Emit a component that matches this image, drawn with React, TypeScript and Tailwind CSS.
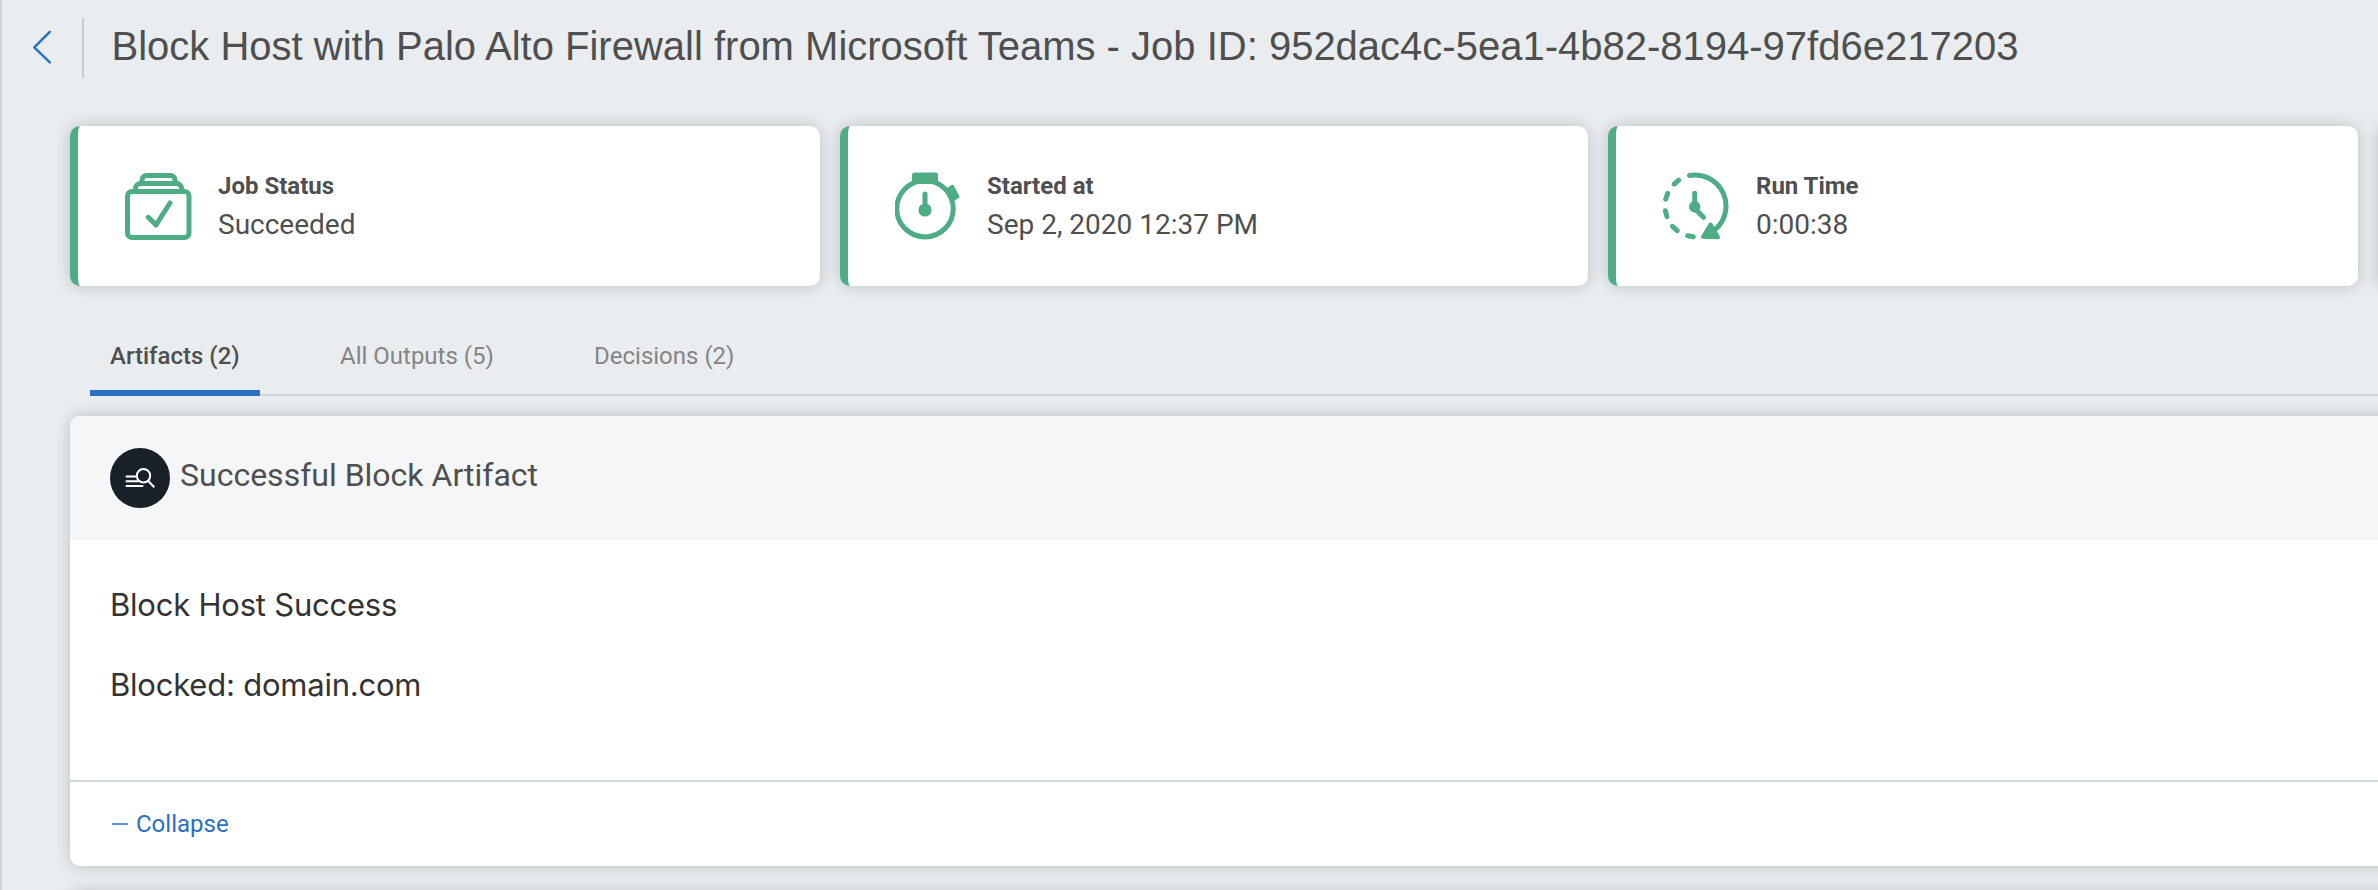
import React from "react";

const shadow = "shadow-[0_0_16px_rgba(0,0,0,0.2)]";

function JobIcon() {
  return (
    <svg viewBox="0 0 68 68" className="size-[68px]" fill="none" stroke="#4ead84" strokeWidth="5" strokeLinecap="round" strokeLinejoin="round">
      <rect x="2.5" y="19.5" width="61.500" height="46" rx="4.5" />
      <path d="M10.5 19V16.5a5 5 0 0 1 5-5h36a5 5 0 0 1 5 5V19M17 11V8a4.500 4.500 0 0 1 4.500-4.500h24a4.500 4.500 0 0 1 4.500 4.500V11" strokeLinecap="butt" />
      <path d="M23.300 45.300L31 53L45 31" />
    </svg>
  );
}

function StopwatchIcon() {
  return (
    <svg viewBox="0 0 68 68" className="size-[68px]" fill="#4ead84">
      <circle cx="30" cy="36.700" r="28.200" fill="none" stroke="#4ead84" strokeWidth="5" />
      <path d="M17 12V3a2.500 2.500 0 0 1 2.500-2.500h21a2.500 2.500 0 0 1 2.500 2.500V12z" />
      <path d="M50.500 17L56 13.200a2.200 2.200 0 0 1 3.200 1L64.300 24a1.800 1.800 0 0 1-.8 2.300L58.500 29z" />
      <circle cx="30" cy="38" r="6.600" />
      <path d="M30 38V22" stroke="#4ead84" strokeWidth="5" strokeLinecap="round" />
    </svg>
  );
}

function RunTimeIcon() {
  return (
    <svg viewBox="0 0 68 68" className="size-[68px]" fill="none" stroke="#4ead84" strokeWidth="5" strokeLinecap="round">
      <path d="M26.500 3.500A31 31 0 0 1 52 57.700" />
      <path d="M15.700 8.200L11.200 12.200M4.700 21.300L2.700 27.200M2.300 38.700L3.900 44.700M9.500 54.300L14.200 58.700M24.700 63.800L30.300 64.800" />
      <circle cx="31.700" cy="34.700" r="5.700" fill="#4ead84" stroke="none" />
      <path d="M31.700 34.700V21.300M31.700 36.500L40.500 45.300" />
      <path d="M47.600 52.500L40 64.700L55 65.200z" fill="#4ead84" strokeWidth="4" strokeLinejoin="round" />
    </svg>
  );
}

const stats = [
  { label: "Job Status", value: "Succeeded", icon: <JobIcon />, width: "w-[750px]", gap: "ml-[25px]" },
  { label: "Started at", value: "Sep 2, 2020 12:37 PM", icon: <StopwatchIcon />, width: "w-[748px]", gap: "ml-6" },
  { label: "Run Time", value: "0:00:38", icon: <RunTimeIcon />, width: "w-[750px]", gap: "ml-[25px]" },
  { label: "", value: "", icon: null, width: "w-[750px]", gap: "ml-[25px]" },
];

export default function App() {
  return (
    <div className="h-[890px] w-full overflow-hidden border-l-2 border-[#cdd2d6] bg-[#e9edf0] font-[Roboto,sans-serif] text-[#4f4f4f]">
      <header className="flex h-[126px] items-start pt-[18px]">
        <button aria-label="Back" className="flex h-[60px] w-20 items-center pl-[29px]">
          <svg viewBox="0 0 22 36" className="h-9 w-[22px]" fill="none" stroke="#2b6fc4" strokeWidth="2.500" strokeLinecap="round" strokeLinejoin="round">
            <path d="M18.800 1.800L3.300 17.300L18.800 32.300" />
          </svg>
        </button>
        <div className="h-[60px] w-0.5 bg-[#c9cdd0]" />
        <h1 className="ml-[27.5px] pt-[5px] font-['Liberation_Sans',sans-serif] text-[40px] leading-[46px] whitespace-nowrap">
          Block Host with Palo Alto Firewall from Microsoft Teams - Job ID: 952dac4c-5ea1-4b82-8194-97fd6e217203
        </h1>
      </header>

      <section className="ml-[68px] flex w-[3060px] gap-5">
        {stats.map((s, i) => (
          <div key={i} className={`flex h-40 shrink-0 items-center rounded-[10px] border-l-8 border-[#4ead84] bg-white pl-[47px] ${s.width} ${shadow}`}>
            {s.icon}
            <div className={s.gap}>
              <div className="text-2xl leading-9 font-bold">{s.label}</div>
              <div className="pt-px text-[28px] leading-[39px]">{s.value}</div>
            </div>
          </div>
        ))}
      </section>

      <nav className="mt-[30px] ml-[88px] flex h-20 items-stretch border-b-2 border-[#d1d5d9] text-2xl leading-7 text-[#858585]">
        <div className="-mb-0.5 w-[170px] border-b-[6px] border-[#2b6fc4] pt-[26px] pl-5 font-medium whitespace-nowrap text-[#4f4f4f]">Artifacts (2)</div>
        <div className="ml-20 w-[254px] pt-[26px] whitespace-nowrap">All Outputs (5)</div>
        <div className="pt-[26px] whitespace-nowrap">Decisions (2)</div>
      </nav>

      <article className={`mt-5 -mr-10 ml-[68px] h-[450px] overflow-hidden rounded-[10px] bg-white ${shadow}`}>
        <div className="flex h-[124px] items-start bg-[#f5f6f8] pt-8 pl-10">
          <svg viewBox="0 0 60 60" className="size-[60px]" fill="none" stroke="#fff" strokeWidth="2">
            <circle cx="30" cy="30" r="30" fill="#1a2028" stroke="none" />
            <path d="M38.300 33L44.300 39.300M15.700 28.500H26.500M15.700 33.300H29M15.700 38H33.300" />
            <circle cx="33.500" cy="27.700" r="6.700" />
          </svg>
          <h2 className="ml-2.5 pt-2 text-[32px] leading-[38px]">Successful Block Artifact</h2>
        </div>
        <div className="flex h-60 flex-col gap-10 pt-[45px] pl-10 font-[Inter,sans-serif] text-[31px] leading-10 tracking-[-0.22px] text-[#333]">
          <p>Block Host Success</p>
          <p>Blocked: domain.com</p>
        </div>
        <div className="flex h-[86px] items-center border-t-2 border-[#cfd4d9] pl-[42px] text-2xl leading-7 text-[#2b6fc4]">
          <svg viewBox="0 0 16 4" className="h-1 w-4" stroke="#2b6fc4" strokeWidth="1.400">
            <path d="M0 2H16" />
          </svg>
          <span className="ml-2">Collapse</span>
        </div>
      </article>
      <article className={`mt-[26px] -mr-10 ml-[68px] h-40 rounded-[10px] bg-[#f5f6f8] ${shadow}`} />
    </div>
  );
}
